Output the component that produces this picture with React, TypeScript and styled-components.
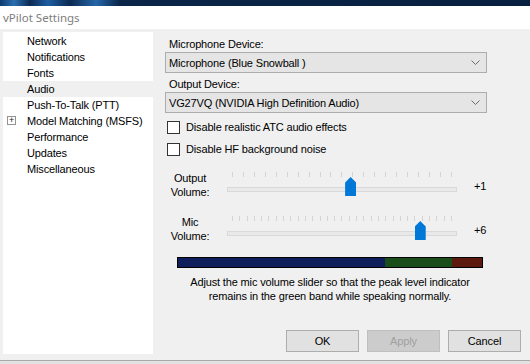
import React from "react";
import styled, { createGlobalStyle } from "styled-components";

const GlobalStyle = createGlobalStyle`
  html, body {
    margin: 0;
    padding: 0;
    background: #f0f0f0;
  }
  body {
    font-family: "Liberation Sans", Arial, sans-serif;
    font-size: 11px;
    letter-spacing: -0.15px;
    color: #000;
  }
`;

const Window = styled.div`
  width: 530px;
  height: 364px;
  overflow: hidden;
  display: flex;
  flex-direction: column;
  background: #f0f0f0;
`;

const Desktop = styled.div`
  height: 6px;
  background: linear-gradient(
    90deg,
    #0d3a6e 0px,
    #2a6fb0 14px,
    #0c2b55 30px,
    #1d5da0 48px,
    #0b2a52 70px,
    #2466a8 96px,
    #0a2548 120px,
    #08203f 530px
  );
`;

const TitleBar = styled.div`
  height: 24px;
  background: #fff;
  display: flex;
  align-items: center;
  padding-left: 3px;
  font-family: "Noto Sans", "Open Sans", sans-serif;
  font-size: 11.5px;
  letter-spacing: 0;
  color: #7d7d7d;
`;

const Body = styled.div`
  height: 331px;
  box-sizing: border-box;
  display: flex;
  padding: 3px 0 8px 3px;
`;

const BottomEdge = styled.div`
  height: 3px;
  border-top: 1px solid #a9a9a9;
  background: #e2e2e2;
`;

const Tree = styled.ul`
  list-style: none;
  margin: 0;
  padding: 1px 0 0;
  width: 150px;
  height: 322px;
  box-sizing: border-box;
  background: #fff;
  flex-shrink: 0;
`;

const TreeItem = styled.li<{ $selected?: boolean }>`
  position: relative;
  height: 16px;
  line-height: 16px;
  padding-left: 24px;
  background: ${(p) => (p.$selected ? "#f0f0f0" : "transparent")};
  white-space: nowrap;
`;

const Expander = styled.span`
  position: absolute;
  left: 4px;
  top: 3px;
  width: 9px;
  height: 9px;
  box-sizing: border-box;
  border: 1px solid #929292;
  display: flex;
  align-items: center;
  justify-content: center;
  font-size: 9px;
  line-height: 7px;
  color: #222;
`;

const Panel = styled.div`
  flex: 1;
  margin-left: 12px;
  padding-right: 9px;
  display: flex;
  flex-direction: column;
`;

const FieldLabel = styled.div<{ $top: number }>`
  line-height: 13px;
  height: 13px;
  margin: ${(p) => p.$top}px 0 0 4px;
`;

const Combo = styled.div`
  margin-top: 1px;
  width: 322px;
  height: 21px;
  box-sizing: border-box;
  border: 1px solid #adadad;
  background: #e5e5e5;
  display: flex;
  align-items: center;
  justify-content: space-between;
  padding: 0 6px 0 3px;
`;

const CheckRow = styled.label`
  margin-top: 6px;
  height: 16px;
  display: flex;
  align-items: center;
`;

const CheckBox = styled.span`
  width: 13px;
  height: 13px;
  box-sizing: border-box;
  border: 1px solid #333;
  background: #fff;
  margin-left: 2px;
  margin-right: 6px;
`;

const SliderRow = styled.div<{ $top?: number }>`
  margin-top: ${(p) => p.$top ?? 0}px;
  height: 44px;
  display: flex;
`;

const SliderLabel = styled.div`
  width: 44px;
  margin-left: 3px;
  padding-top: 2px;
  text-align: center;
  line-height: 14px;
`;

const SliderArea = styled.div`
  position: relative;
  width: 232px;
  margin-left: 14px;
`;

const TickRow = styled.div`
  margin-top: 3px;
  height: 5px;
  padding: 0 6px;
  display: flex;
  justify-content: space-between;
`;

const Tick = styled.span`
  width: 1px;
  height: 5px;
  background: #d4d4d4;
`;

const Track = styled.div`
  margin: 10px 1px 0;
  height: 3px;
  border: 1px solid #d9d9d9;
  background: #e9e9e9;
`;

const Thumb = styled.span`
  position: absolute;
  top: 8px;
  width: 11px;
  height: 19px;
  margin-left: -5px;
  background: #0078d7;
  clip-path: polygon(50% 0, 100% 28%, 100% 100%, 0 100%, 0 28%);
`;

const SliderValue = styled.div`
  margin-left: 16px;
  padding-top: 10px;
  line-height: 14px;
`;

const LevelBar = styled.div`
  margin-left: 12px;
  width: 306px;
  height: 11px;
  box-sizing: border-box;
  border: 1px solid #000;
  display: flex;
`;

const LevelBand = styled.span<{ $color: string; $width: number }>`
  width: ${(p) => p.$width}px;
  background: ${(p) => p.$color};
`;

const Hint = styled.p`
  margin: 7px 0 0 12px;
  width: 306px;
  text-align: center;
  line-height: 14px;
`;

const ButtonRow = styled.div`
  margin-top: auto;
  display: flex;
  justify-content: flex-end;
  gap: 8px;
`;

const Button = styled.button<{ $disabled?: boolean }>`
  width: 73px;
  height: 22px;
  box-sizing: border-box;
  border: 1px solid ${(p) => (p.$disabled ? "#bfbfbf" : "#adadad")};
  background: ${(p) => (p.$disabled ? "#cccccc" : "#e1e1e1")};
  color: ${(p) => (p.$disabled ? "#a0a0a0" : "#000")};
  font-family: "Liberation Sans", Arial, sans-serif;
  font-size: 11px;
  letter-spacing: -0.15px;
  padding: 0;
`;

const Chevron = () => (
  <svg width="9" height="5" viewBox="0 0 9 5">
    <polyline points="0.5,0.5 4.5,4.5 8.5,0.5" fill="none" stroke="#6d6d6d" strokeWidth="1" />
  </svg>
);

const treeItems = [
  "Network",
  "Notifications",
  "Fonts",
  "Audio",
  "Push-To-Talk (PTT)",
  "Model Matching (MSFS)",
  "Performance",
  "Updates",
  "Miscellaneous",
];

type SliderProps = {
  top?: number;
  label: [string, string];
  ticks: number;
  position: number;
  value: string;
};

const Slider: React.FC<SliderProps> = ({ top, label, ticks, position, value }) => (
  <SliderRow $top={top}>
    <SliderLabel>
      {label[0]}
      <br />
      {label[1]}
    </SliderLabel>
    <SliderArea>
      <TickRow>
        {Array.from({ length: ticks }).map((_, i) => (
          <Tick key={i} />
        ))}
      </TickRow>
      <Track />
      <Thumb style={{ left: `${position * 100}%` }} />
    </SliderArea>
    <SliderValue>{value}</SliderValue>
  </SliderRow>
);

export default function App() {
  return (
    <>
      <GlobalStyle />
      <Window>
        <Desktop />
        <TitleBar>vPilot Settings</TitleBar>
        <Body>
          <Tree>
            {treeItems.map((item) => (
              <TreeItem key={item} $selected={item === "Audio"}>
                {item.startsWith("Model") && <Expander>+</Expander>}
                {item}
              </TreeItem>
            ))}
          </Tree>
          <Panel>
            <FieldLabel $top={6}>Microphone Device:</FieldLabel>
            <Combo>
              <span>Microphone (Blue Snowball )</span>
              <Chevron />
            </Combo>
            <FieldLabel $top={5}>Output Device:</FieldLabel>
            <Combo>
              <span>VG27VQ (NVIDIA High Definition Audio)</span>
              <Chevron />
            </Combo>
            <CheckRow>
              <CheckBox />
              Disable realistic ATC audio effects
            </CheckRow>
            <CheckRow>
              <CheckBox />
              Disable HF background noise
            </CheckRow>
            <Slider top={12} label={["Output", "Volume:"]} ticks={21} position={0.535} value="+1" />
            <Slider label={["Mic", "Volume:"]} ticks={31} position={0.835} value="+6" />
            <LevelBar>
              <LevelBand $color="#0e1f5b" $width={207} />
              <LevelBand $color="#194d19" $width={67} />
              <LevelBand $color="#5b1a0d" $width={30} />
            </LevelBar>
            <Hint>
              Adjust the mic volume slider so that the peak level indicator
              <br />
              remains in the green band while speaking normally.
            </Hint>
            <ButtonRow>
              <Button>OK</Button>
              <Button $disabled>Apply</Button>
              <Button>Cancel</Button>
            </ButtonRow>
          </Panel>
        </Body>
        <BottomEdge />
      </Window>
    </>
  );
}
